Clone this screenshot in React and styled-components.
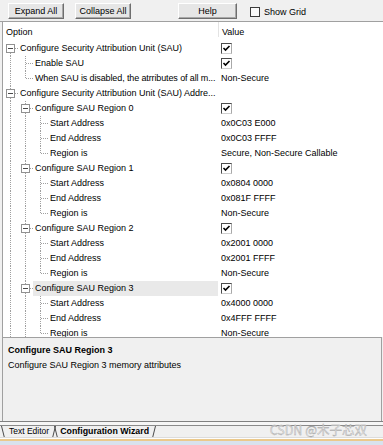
import React from 'react';
import styled, { createGlobalStyle } from 'styled-components';

const GlobalStyle = createGlobalStyle`
  html, body {
    margin: 0;
    padding: 0;
    background: #f0f0f0;
  }
  body {
    font-family: "Liberation Sans", Arial, sans-serif;
    font-size: 9px;
    color: #000;
  }
  * {
    box-sizing: border-box;
  }
`;

// tree data, one entry per visible row
const regions = [
  { start: '0x0C03 E000', end: '0x0C03 FFFF', kind: 'Secure, Non-Secure Callable' },
  { start: '0x0804 0000', end: '0x081F FFFF', kind: 'Non-Secure' },
  { start: '0x2001 0000', end: '0x2001 FFFF', kind: 'Non-Secure' },
  { start: '0x4000 0000', end: '0x4FFF FFFF', kind: 'Non-Secure' },
];

const rows = [
  { guides: [{ type: 'node', below: true }], label: 'Configure Security Attribution Unit (SAU)', check: true },
  { guides: ['pipe', 'tee'], label: 'Enable SAU', check: true },
  { guides: ['pipe', 'ell'], label: 'When SAU is disabled, the atrributes of all m...', value: 'Non-Secure', tight: true },
  { guides: [{ type: 'node', above: true, below: true }], label: 'Configure Security Attribution Unit (SAU) Addre...' },
  ...regions.flatMap((r, i) => [
    { guides: ['pipe', { type: 'node', above: true, below: true }], label: `Configure SAU Region ${i}`, check: true, selected: i === 3 },
    { guides: ['pipe', 'pipe', 'tee'], label: 'Start Address', value: r.start },
    { guides: ['pipe', 'pipe', 'tee'], label: 'End Address', value: r.end },
    { guides: ['pipe', 'pipe', 'ell'], label: 'Region is', value: r.kind },
  ]),
];

const Guide = ({ g }) => {
  const kind = typeof g === 'string' ? { type: g } : g;
  const dot = { stroke: '#a0a0a0', strokeDasharray: '1 1', shapeRendering: 'crispEdges' };
  return (
    <GuideSvg width="15" height="15" viewBox="0 0 15 15">
      {kind.type === 'pipe' && <line x1="7.5" y1="0" x2="7.5" y2="15" {...dot} />}
      {kind.type === 'tee' && (
        <>
          <line x1="7.5" y1="0" x2="7.5" y2="15" {...dot} />
          <line x1="8" y1="7.5" x2="15" y2="7.5" {...dot} />
        </>
      )}
      {kind.type === 'ell' && (
        <>
          <line x1="7.5" y1="0" x2="7.5" y2="8" {...dot} />
          <line x1="8" y1="7.5" x2="15" y2="7.5" {...dot} />
        </>
      )}
      {kind.type === 'node' && (
        <>
          {kind.above && <line x1="7.5" y1="0" x2="7.5" y2="3" {...dot} />}
          {kind.below && <line x1="7.5" y1="12" x2="7.5" y2="15" {...dot} />}
          <line x1="12" y1="7.5" x2="15" y2="7.5" {...dot} />
          <rect x="3.5" y="3.5" width="8" height="8" fill="#fff" stroke="#919191" shapeRendering="crispEdges" />
          <line x1="5" y1="7.5" x2="10" y2="7.5" stroke="#4a4a4a" shapeRendering="crispEdges" />
        </>
      )}
    </GuideSvg>
  );
};

const Check = () => (
  <CheckBox>
    <svg width="9" height="9" viewBox="0 0 9 9">
      <path d="M1.5 4 L3.5 6 L7.5 2" fill="none" stroke="#000" strokeWidth="1.6" />
    </svg>
  </CheckBox>
);

export default function App() {
  return (
    <Window>
      <GlobalStyle />
      <Toolbar>
        <ToolButton $w={56}>Expand All</ToolButton>
        <ToolButton $w={56} $ml={11}>Collapse All</ToolButton>
        <ToolButton $w={59} $ml={47}>Help</ToolButton>
        <ShowGrid>
          <GridBox />
          Show Grid
        </ShowGrid>
      </Toolbar>

      <TreePanel>
        <Header>
          <HeaderLabel $w={215}>Option</HeaderLabel>
          <HeaderSep />
          <HeaderLabel $pl={3}>Value</HeaderLabel>
        </Header>
        {rows.map((r, i) => (
          <Row key={i}>
            <OptionCell>
              {r.guides.map((g, j) => (
                <Guide key={j} g={g} />
              ))}
              <Label $selected={r.selected} $tight={r.tight}>{r.label}</Label>
            </OptionCell>
            <ValueCell>{r.check ? <Check /> : r.value}</ValueCell>
          </Row>
        ))}
      </TreePanel>

      <DescPanel>
        <DescTitle>Configure SAU Region 3</DescTitle>
        <DescText>Configure SAU Region 3 memory attributes</DescText>
      </DescPanel>

      <TabStrip>
        <TabRow>
          <Tab>Text Editor</Tab>
          <Tab $active>Configuration Wizard</Tab>
        </TabRow>
        <Watermark>CSDN @木子芯双</Watermark>
      </TabStrip>
      <StatusEdge />
    </Window>
  );
}

const Window = styled.div`
  width: 383px;
  height: 445px;
  display: flex;
  flex-direction: column;
  overflow: hidden;
  background: #f0f0f0;
`;

const Toolbar = styled.div`
  flex: 0 0 22px;
  display: flex;
  align-items: flex-start;
  padding: 3px 0 0 8px;
  border-bottom: 1px solid #a0a0a0;
`;

const ToolButton = styled.button`
  width: ${({ $w }) => $w}px;
  height: 16px;
  margin: 0 0 0 ${({ $ml }) => $ml || 0}px;
  padding: 0;
  display: flex;
  align-items: center;
  justify-content: center;
  font-family: inherit;
  font-size: 9px;
  color: #000;
  background: #e6e6e6;
  border: 1px solid;
  border-color: #fff #6e6e6e #6e6e6e #fff;
  box-shadow: inset -1px -1px 0 #a8a8a8;
`;

const ShowGrid = styled.label`
  display: flex;
  align-items: center;
  gap: 4px;
  margin: 4px 0 0 13px;
  height: 10px;
`;

const GridBox = styled.span`
  width: 10px;
  height: 10px;
  border: 1px solid #3c3c3c;
  background: #fbfbfb;
`;

const TreePanel = styled.div`
  flex: 0 0 315px;
  margin-left: 2px;
  border-left: 1px solid #a0a0a0;
  background: #fff;
  overflow: hidden;
`;

const Header = styled.div`
  display: flex;
  height: 19px;
`;

const HeaderLabel = styled.div`
  ${({ $w }) => ($w ? `width: ${$w}px;` : 'flex: 1;')}
  padding: 2px 0 0 ${({ $pl }) => $pl ?? 3}px;
  line-height: 17px;
`;

const HeaderSep = styled.div`
  width: 1px;
  height: 15px;
  background: #e3e3e3;
`;

const Row = styled.div`
  display: flex;
  height: 15px;
  line-height: 15px;
  white-space: nowrap;
`;

const OptionCell = styled.div`
  flex: 0 0 215px;
  display: flex;
  overflow: hidden;
`;

const GuideSvg = styled.svg`
  flex: none;
  display: block;
`;

const Label = styled.div`
  flex: 1;
  padding-left: 2px;
  overflow: hidden;
  letter-spacing: ${({ $tight }) => ($tight ? '-0.12px' : 'normal')};
  background: ${({ $selected }) => ($selected ? '#e9e9e9' : 'transparent')};
`;

const ValueCell = styled.div`
  flex: 1;
  display: flex;
  align-items: center;
  padding-left: 3px;
`;

const CheckBox = styled.span`
  width: 11px;
  height: 11px;
  display: flex;
  align-items: center;
  justify-content: center;
  border: 1px solid;
  border-color: #4a4a4a #a8a8a8 #d0d0d0 #4a4a4a;
  background: #fff;
`;

const DescPanel = styled.div`
  flex: 0 0 84px;
  margin: 0 1px 0 2px;
  padding: 5px 0 0 5px;
  border: 1px solid #a0a0a0;
  border-bottom: none;
  background: #f0f0f0;
  line-height: 15px;
`;

const DescTitle = styled.div`
  font-weight: bold;
`;

const DescText = styled.div``;

const TabStrip = styled.div`
  position: relative;
  flex: 0 0 16px;
  padding-top: 3px;
  border-top: 1px solid #808080;
  background: #f6f6f6;
`;

const TabRow = styled.div`
  height: 12px;
  display: flex;
  padding-left: 1px;
  border-top: 1px solid #8a8a8a;
  background: #f0f0f0;
`;

const Tab = styled.div`
  position: relative;
  height: 11px;
  margin-left: ${({ $active }) => ($active ? '-2px' : '0')};
  padding: 0 7px 0 ${({ $active }) => ($active ? '6px' : '8px')};
  font-size: ${({ $active }) => ($active ? '8.8px' : '8.5px')};
  font-weight: ${({ $active }) => ($active ? 'bold' : 'normal')};
  line-height: 11px;
  white-space: nowrap;

  &::before,
  &::after {
    content: '';
    position: absolute;
    top: 0;
    bottom: 0;
    width: 1px;
    background: #4a4a4a;
    transform-origin: top;
  }
  &::before {
    left: 0;
    transform: skewX(14deg);
  }
  &::after {
    right: 0;
    transform: skewX(-14deg);
  }
`;

const Watermark = styled.div`
  position: absolute;
  right: 16px;
  top: 1px;
  font-family: "Noto Sans CJK SC", "Liberation Sans", sans-serif;
  font-size: 12.5px;
  line-height: 14px;
  color: #e2e2e2;
  -webkit-text-stroke: 0.3px #9a9a9a;
`;

const StatusEdge = styled.div`
  flex: 0 0 8px;
  background: linear-gradient(
    to bottom,
    #dcdcdc 0 1px,
    #fdfdfd 1px 2px,
    #ebc98c 2px 4px,
    #d9e2ee 4px
  );
`;
